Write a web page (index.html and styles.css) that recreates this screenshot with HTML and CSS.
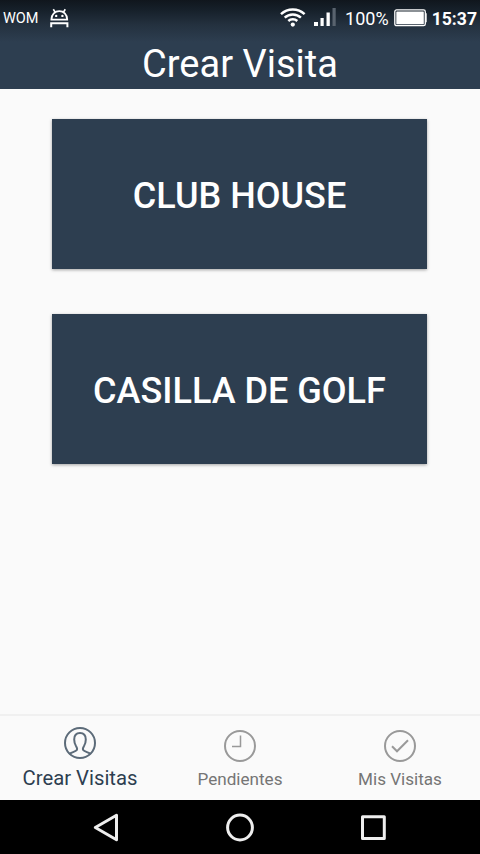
FILE: index.html
```html
<!DOCTYPE html>
<html lang="es">
<head>
    <meta charset="UTF-8">
    <meta name="viewport" content="width=device-width, initial-scale=1.0">
    <title>Crear Visita</title>
    <link rel="stylesheet" href="styles.css">
</head>
<body>
    <div class="screen">
        <header class="header">
            <div class="status-bar">
                <span class="carrier">WOM</span>
                <svg class="icon-android" width="20" height="20" viewBox="0 0 20 20" fill="none" stroke="#fff">
                    <path d="M1.4 11.6C1.4 6.3 5.1 3.2 9.3 3.2s7.9 3.1 7.9 8.4z" stroke-width="1.8"/>
                    <path d="M5.2 4.2L3.3 1.2M13.4 4.2L15.3 1.2" stroke-width="1.6"/>
                    <path d="M1.2 19.2v-4h16.2v4" stroke-width="2"/>
                    <circle cx="6.2" cy="7.9" r="1.2" fill="#fff" stroke="none"/>
                    <circle cx="12.4" cy="7.9" r="1.2" fill="#fff" stroke="none"/>
                </svg>
                <div class="status-right">
                    <svg class="icon-wifi" width="26" height="20" viewBox="0 0 26 20" fill="none" stroke="#fff" stroke-width="2.5">
                        <path d="M1 6.2a17.2 17.2 0 0 1 23.6 0"/>
                        <path d="M4.7 9.7a11.8 11.8 0 0 1 16.2 0"/>
                        <path d="M8.3 13a6.6 6.6 0 0 1 9 0"/>
                        <circle cx="12.8" cy="16.6" r="2.1" fill="#fff" stroke="none"/>
                    </svg>
                    <svg class="icon-signal" width="22" height="20" viewBox="0 0 22 20" fill="#fff">
                        <rect x="0" y="14" width="4" height="4"/>
                        <rect x="6.5" y="10" width="3.2" height="8"/>
                        <rect x="12.5" y="4.5" width="3.3" height="13.5"/>
                        <rect x="18.5" y="0" width="3.2" height="18" fill="#59636e"/>
                    </svg>
                    <span class="battery-level">100%</span>
                    <svg class="icon-battery" width="34" height="18" viewBox="0 0 34 18">
                        <rect x=".8" y=".9" width="30.5" height="15.8" rx="1.8" fill="none" stroke="#fff" stroke-width="1.3"/>
                        <rect x="2.3" y="2.4" width="27.5" height="12.8" rx=".5" fill="#fff"/>
                        <path d="M31.5 4.3h1.2v9h-1.2z" fill="#fff"/>
                    </svg>
                    <span class="clock">15:37</span>
                </div>
            </div>
            <h1 class="title">Crear Visita</h1>
        </header>

        <main class="content">
            <button class="place-button">CLUB HOUSE</button>
            <button class="place-button">CASILLA DE GOLF</button>
        </main>

        <nav class="tabs">
            <a class="tab active">
                <svg width="34" height="34" viewBox="0 0 34 34" fill="none" stroke="#5c6b79" stroke-width="2">
                    <circle cx="17" cy="17" r="15"/>
                    <path d="M6 28c2.8-1.8 6.4-2.3 7.7-3.8.9-1.2.3-2.5-.6-3.9-1.2-2-1.9-4.2-1.9-6.9 0-4 2.2-6.5 5.8-6.5s5.8 2.5 5.8 6.5c0 2.7-.7 4.9-1.9 6.9-.9 1.4-1.5 2.7-.6 3.9 1.3 1.5 4.9 2 7.7 3.8"/>
                </svg>
                <span>Crear Visitas</span>
            </a>
            <a class="tab">
                <svg width="34" height="34" viewBox="0 0 34 34" fill="none" stroke="#999" stroke-width="2">
                    <circle cx="17" cy="17" r="15"/>
                    <path d="M17.5 6.5v11H9" stroke-width="1.5"/>
                </svg>
                <span>Pendientes</span>
            </a>
            <a class="tab">
                <svg width="34" height="34" viewBox="0 0 34 34" fill="none" stroke="#999" stroke-width="2">
                    <circle cx="17" cy="17" r="15"/>
                    <path d="M9 17.3l5 5L25 11.2"/>
                </svg>
                <span>Mis Visitas</span>
            </a>
        </nav>

        <div class="system-nav">
            <svg width="28" height="30" viewBox="0 0 28 30" fill="none" stroke="#eee" stroke-width="3" stroke-linejoin="round">
                <path d="M23.5 3.3v24.4L2.3 15.5z"/>
            </svg>
            <svg width="28" height="30" viewBox="0 0 28 30" fill="none" stroke="#eee" stroke-width="3">
                <circle cx="14" cy="15.5" r="12.4"/>
            </svg>
            <svg width="28" height="30" viewBox="0 0 28 30" fill="none" stroke="#eee" stroke-width="3" stroke-linejoin="round">
                <rect x="3.5" y="4.7" width="21.8" height="21.8"/>
            </svg>
        </div>
    </div>
</body>
</html>
```
FILE: styles.css
```css
* {
    box-sizing: border-box;
}
body {
    margin: 0;
    font-family: Roboto, sans-serif;
    background-color: #fafafa;
}
.screen {
    display: flex;
    flex-direction: column;
    width: 480px;
    height: 854px;
    overflow: hidden;
}
.header {
    height: 89px;
    color: #fff;
    background: linear-gradient(#10161d 0, #16202a 10px, #24313f 25px, #2d3e50 42px);
}
.status-bar {
    display: flex;
    align-items: center;
    height: 36px;
    padding: 0 3px;
    white-space: nowrap;
}
.carrier {
    font-size: 14.5px;
}
.icon-android {
    margin-left: 11px;
}
.status-right {
    display: flex;
    align-items: center;
    margin-left: auto;
}
.icon-signal {
    margin-left: 8px;
}
.battery-level {
    margin-left: 9px;
    font-size: 18px;
    line-height: 20px;
    padding-top: 2px;
}
.icon-battery {
    margin-left: 5px;
}
.clock {
    margin-left: 4px;
    font-size: 17.6px;
    font-weight: 700;
    line-height: 20px;
    padding-top: 2px;
}
.title {
    margin: 0;
    font-size: 38px;
    font-weight: 400;
    line-height: 56px;
    text-align: center;
}
.content {
    flex: 1;
    display: flex;
    flex-direction: column;
    gap: 45px;
    padding: 30px 53px 0 52px;
}
.place-button {
    height: 150px;
    border: none;
    padding: 4px 0 0;
    background-color: #2d3e50;
    color: #fff;
    font-family: inherit;
    font-size: 36px;
    font-weight: 500;
    box-shadow: 0 1px 3px rgba(0,0,0,0.35);
}
.tabs {
    display: flex;
    height: 86px;
    border-top: 2px solid #f0f0f0;
}
.tab {
    flex: 1;
    display: flex;
    flex-direction: column;
    align-items: center;
    padding-top: 13px;
    color: #757575;
    font-size: 17.1px;
    line-height: 24px;
    white-space: nowrap;
}
.tab span {
    margin-top: 4px;
}
.tab.active {
    padding-top: 10px;
    color: #2d3e50;
    font-size: 20.3px;
}
.tab.active span {
    margin-top: 6px;
}
.system-nav {
    display: flex;
    justify-content: center;
    gap: 105px;
    height: 54px;
    padding: 12px 1px 0 0;
    background-color: #000;
}
```
